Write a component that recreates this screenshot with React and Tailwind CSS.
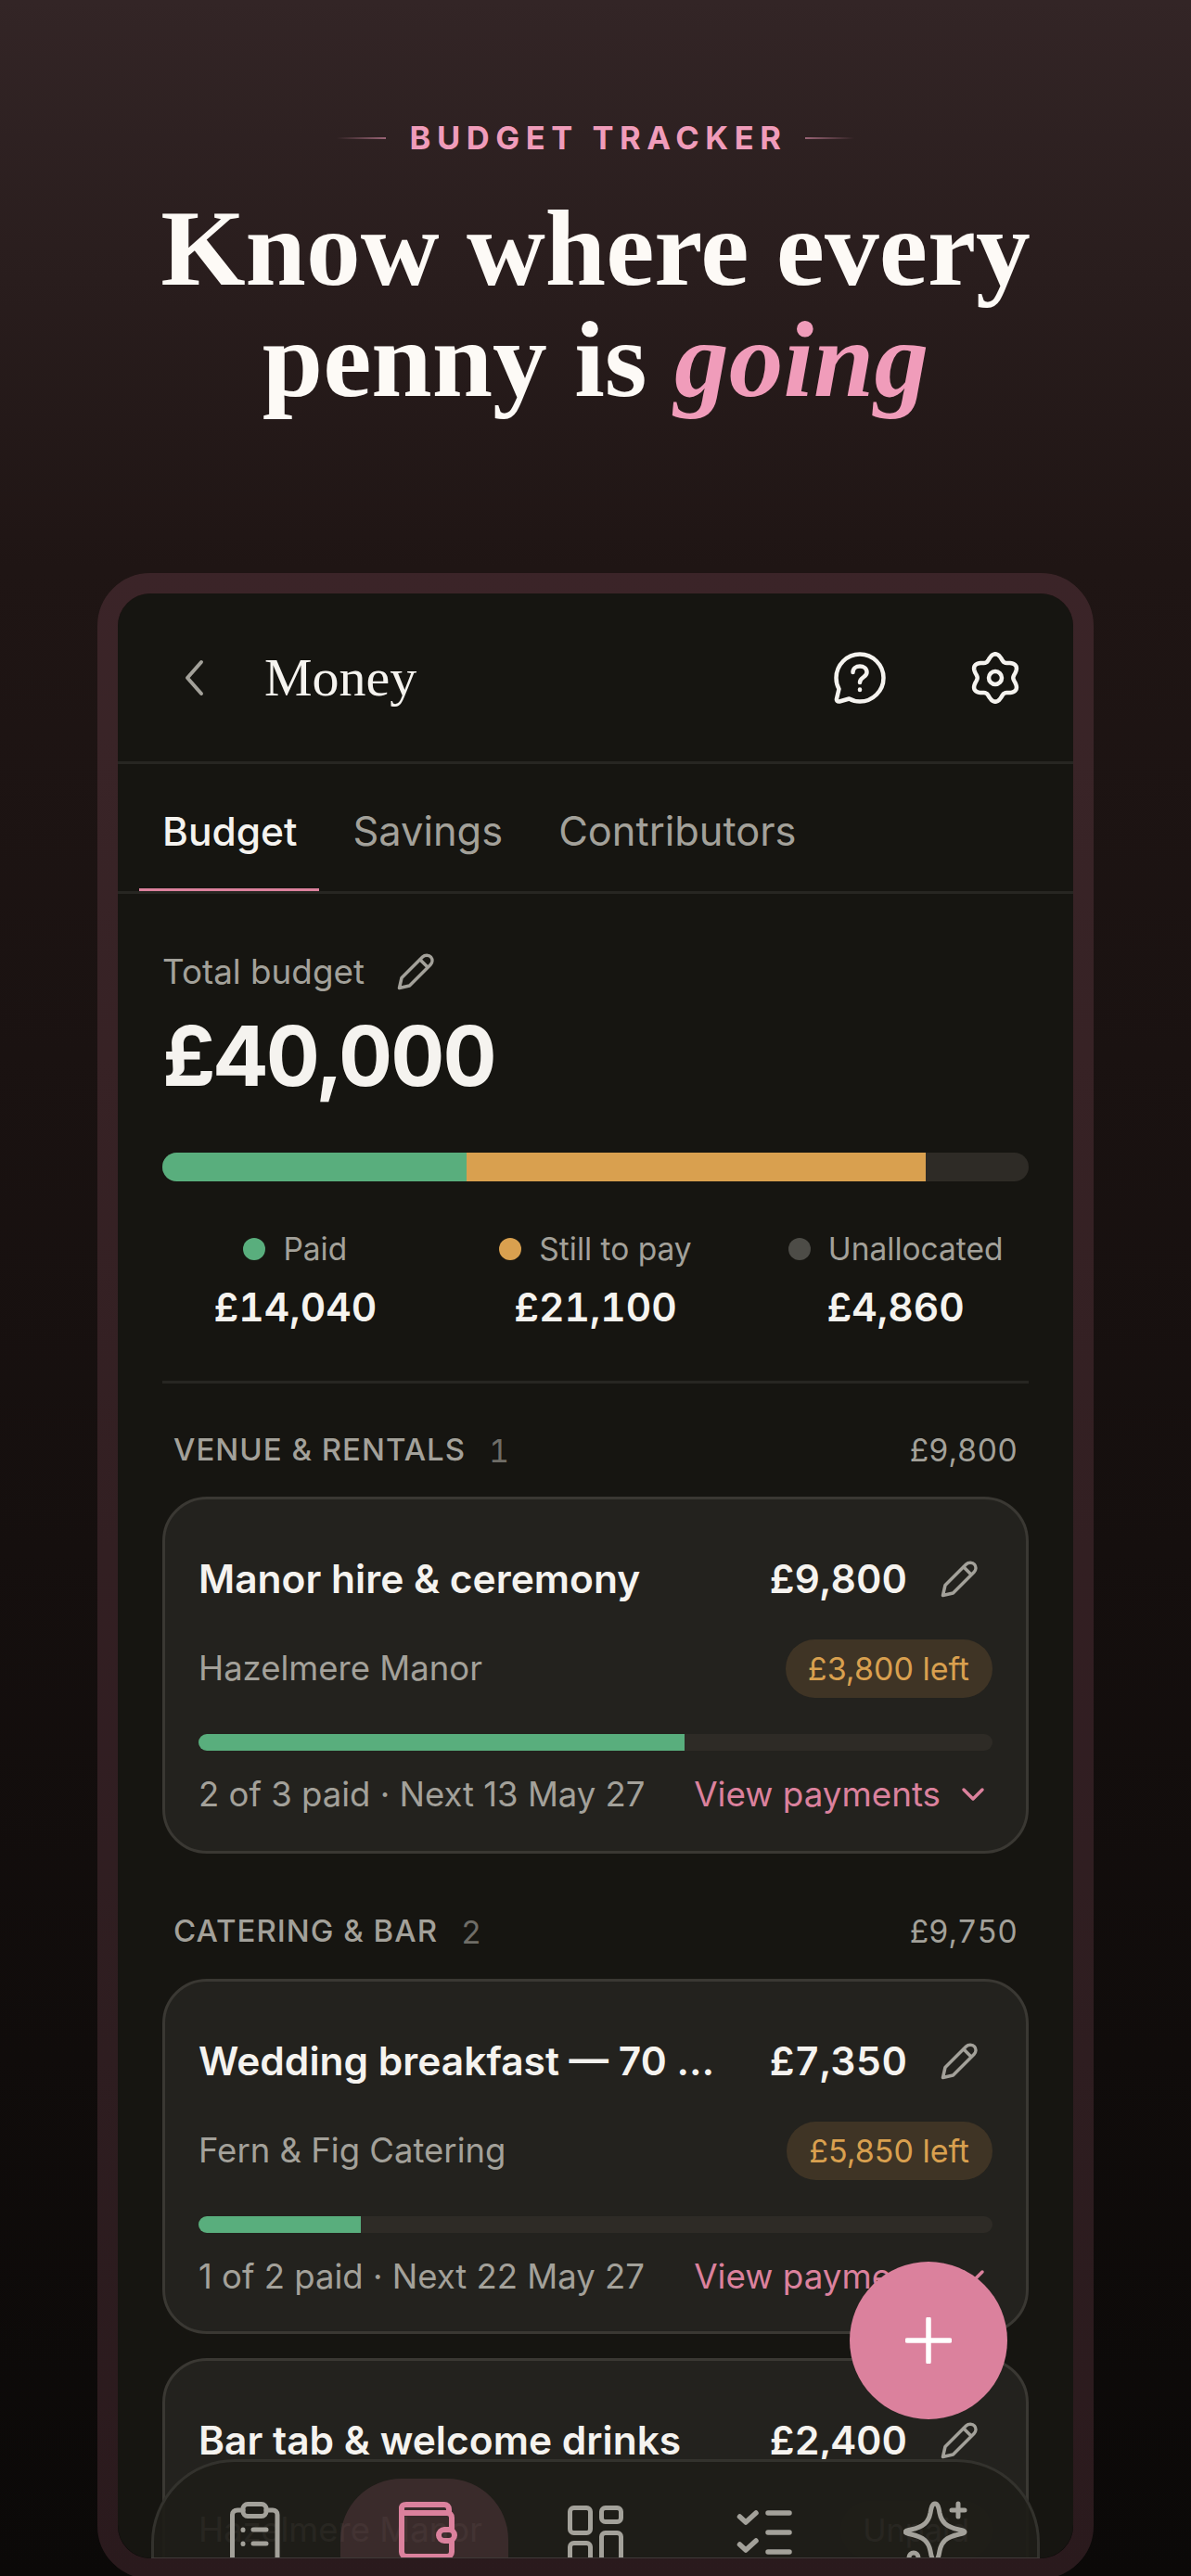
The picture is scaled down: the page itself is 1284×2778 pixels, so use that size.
import React from "react";

const Pencil = ({ cls }) => (
  <svg viewBox="0 0 40 40" fill="none" stroke="currentColor" strokeWidth="3.5" strokeLinecap="round" strokeLinejoin="round" className={cls}>
    <path d="M2.5 37.5 L5 26.5 L27.5 4 C30 1.5 34.5 1.5 36.5 4 C38.5 6.5 38.5 10 36 12.5 L13.5 35 Z" />
    <path d="M25 7 L32.5 14.5" />
  </svg>
);

const gearPath = (() => {
  const pts = [];
  for (let i = 0; i < 120; i++) {
    const t = (i / 120) * Math.PI * 2;
    const r = 22.5 + 3.2 * Math.cos(6 * t);
    pts.push((28 + r * Math.sin(t)).toFixed(2) + " " + (28 - r * Math.cos(t)).toFixed(2));
  }
  return "M" + pts.join(" L") + " Z";
})();

const Card = ({ title, amount, vendor, pill, pillAmber = true, pct, foot, tall = true }) => (
  <div className={(tall ? "h-[385px]" : "h-[383px]") + " shrink-0 rounded-[48px] border-[3px] border-[#3a3833] bg-[#23221e] px-[36px] pt-[58px]"}>
    <div className="flex items-center justify-between h-[56px]">
      <div className="w-[565px] truncate text-[42.5px] leading-[56px] font-semibold text-[#f5f3ef]">{title}</div>
      <div className="flex items-center">
        <span className="text-[42.5px] leading-[56px] font-semibold tabular-nums text-[#f5f3ef]">{amount}</span>
        <Pencil cls="w-[40px] h-[40px] ml-[36px] mr-[16px] text-[#a3a19a]" />
      </div>
    </div>
    <div className="flex items-center justify-between mt-[37px] h-[63px]">
      <span className="text-[36.5px] text-[#a3a19a]">{vendor}</span>
      <span className={pillAmber ? "rounded-full pl-[24px] pr-[25px] h-[63px] flex items-center text-[34px] text-[#d9a04f] bg-[#3f3425]" : "rounded-full pl-[24px] pr-[25px] h-[63px] flex items-center text-[34px] text-[#a3a19a] bg-[#2e2c27]"}>{pill}</span>
    </div>
    {pct != null && (
      <>
        <div className="mt-[39px] h-[18px] rounded-full bg-[#2e2b26] overflow-hidden">
          <div className="h-full bg-[#59ae7d]" style={{ width: pct + "%" }} />
        </div>
        <div className="flex items-center justify-between mt-[23px] h-[48px]">
          <span className="text-[36.5px] text-[#a3a19a]">{foot}</span>
          <span className="flex items-center text-[36.8px] text-[#db819d]">
            View payments
            <svg viewBox="0 0 26 16" fill="none" stroke="currentColor" strokeWidth="3.5" strokeLinecap="round" strokeLinejoin="round" className="w-[26px] h-[16px] ml-[22px] mr-[8px]"><path d="M3 3 L13 13 L23 3" /></svg>
          </span>
        </div>
      </>
    )}
  </div>
);

const Section = ({ label, n, total }) => (
  <div className="flex items-center justify-between h-[50px] pl-[12px] pr-[12px]">
    <div className="flex items-center">
      <span className="text-[33px] font-medium tracking-[1px] text-[#a3a19a]">{label}</span>
      <span className="text-[34px] tabular-nums text-[#6f6d67] ml-[25px]">{n}</span>
    </div>
    <span className="text-[33.5px] tabular-nums text-[#a3a19a]">{total}</span>
  </div>
);

const Legend = ({ dot, label, value }) => (
  <div className="flex flex-col items-center">
    <div className="flex items-center h-[40px]">
      <span className={"w-[24px] h-[24px] rounded-full mr-[19px] " + dot} />
      <span className="text-[33.5px] text-[#a3a19a]">{label}</span>
    </div>
    <div className="mt-[17px] text-[42.5px] leading-[52px] font-semibold tabular-nums text-[#f5f3ef]">{value}</div>
  </div>
);

export default function App() {
  return (
    <div className="relative w-[1284px] h-[2778px] overflow-hidden bg-gradient-to-b from-[#332526] via-[#1f1514] via-[22%] to-[#0b0908] font-['Inter',sans-serif]">
      <div className="flex flex-col items-center pt-[127px]">
        <div className="flex items-center h-[44px]">
          <span className="w-[53px] h-[2px] bg-gradient-to-r from-transparent to-[#9a6476]" />
          <span className="ml-[26px] mr-[20px] text-[34.5px] font-bold tracking-[0.19em] text-[#f09cba]">BUDGET TRACKER</span>
          <span className="w-[53px] h-[2px] bg-gradient-to-l from-transparent to-[#9a6476]" />
        </div>
        <h1 className="mt-[36px] text-center text-[117.5px] leading-[120px] font-bold text-[#fdfaf6] font-['Liberation_Serif',serif]">
          Know where every<br />penny is <em className="text-[#f09cba]">going</em>
        </h1>
      </div>

      <div className="absolute left-[105px] top-[618px] w-[1074px] h-[2163px] rounded-[57px] border-[22px] border-[#db819d]/15">
        <div className="relative w-full h-full rounded-[36px] bg-[#161511] overflow-hidden">
          <div className="flex items-center h-[184px] border-b-[3px] border-[#272622] pl-[70px] pr-[58px]">
            <svg viewBox="0 0 24 40" fill="none" stroke="#a3a19a" strokeWidth="4" strokeLinecap="round" strokeLinejoin="round" className="w-[24px] h-[40px]"><path d="M20 3 L5 20 L20 37" /></svg>
            <span className="ml-[64px] text-[58px] text-[#f5f3ef] font-['Liberation_Serif',serif]">Money</span>
            <div className="ml-auto flex items-center gap-[92px]">
              <svg viewBox="0 0 56 56" fill="none" stroke="#f5f3ef" strokeWidth="4.5" strokeLinecap="round" strokeLinejoin="round" className="w-[56px] h-[56px]">
                <path d="M28 2.5 C42 2.5 53.5 14 53.5 28 C53.5 42 42 53.5 28 53.5 C24 53.5 20 52.5 16.5 50.5 L6 53.5 C4 54 2.5 52.5 3 50.5 L5.5 40 C3.5 36.5 2.5 32 2.5 28 C2.5 14 14 2.5 28 2.5 Z" />
                <path d="M20.5 22 C20.5 18 24 15.5 28 15.5 C32 15.5 35.5 18 35.5 22 C35.5 27.5 28 27 28 33" />
                <path d="M28 40.5 L28 41" />
              </svg>
              <svg viewBox="0 0 56 56" fill="none" stroke="#f5f3ef" strokeWidth="4.5" strokeLinecap="round" strokeLinejoin="round" className="w-[56px] h-[56px] -mx-[2px]">
                <circle cx="28" cy="28" r="7" />
                <path d={gearPath} />
              </svg>
            </div>
          </div>

          <div className="relative flex items-center h-[140px] border-b-[3px] border-[#272622] pl-[48px] pt-[8px] gap-[60px]">
            <span className="text-[42.5px] font-medium text-[#f5f3ef]">Budget</span>
            <span className="text-[43.4px] text-[#a3a19a]">Savings</span>
            <span className="text-[43.4px] text-[#a3a19a]">Contributors</span>
            <span className="absolute left-[23px] bottom-0 w-[194px] h-[3px] bg-[#db819d]" />
          </div>

          <div className="flex flex-col px-[48px]">
            <div className="flex items-center mt-[64px] h-[40px]">
              <span className="text-[36.8px] text-[#a3a19a]">Total budget</span>
              <Pencil cls="w-[40px] h-[40px] ml-[35px] text-[#a3a19a]" />
            </div>
            <div className="mt-[16px] text-[90px] leading-[110px] font-bold tabular-nums tracking-[-2px] text-[#f5f3ef]">£40,000</div>
            <div className="flex mt-[49px] h-[31px] rounded-full bg-[#2e2b26] overflow-hidden">
              <div className="w-[328px] bg-[#59ae7d]" />
              <div className="w-[495px] bg-[#d9a04f]" />
            </div>
            <div className="grid grid-cols-3 gap-[37px] mt-[53px]">
              <Legend dot="bg-[#59ae7d]" label="Paid" value="£14,040" />
              <Legend dot="bg-[#d9a04f]" label="Still to pay" value="£21,100" />
              <Legend dot="bg-[#4d4c47]" label="Unallocated" value="£4,860" />
            </div>
            <div className="mt-[53px] h-[3px] bg-[#272622]" />
            <div className="mt-[47px]"><Section label="VENUE & RENTALS" n="1" total="£9,800" /></div>
            <div className="mt-[25px]">
              <Card title="Manor hire & ceremony" amount="£9,800" vendor="Hazelmere Manor" pill="£3,800 left" pct={61.2} foot="2 of 3 paid · Next 13 May 27" />
            </div>
            <div className="mt-[59px]"><Section label="CATERING & BAR" n="2" total="£9,750" /></div>
            <div className="mt-[26px]">
              <Card tall={false} title="Wedding breakfast — 70 guests" amount="£7,350" vendor="Fern & Fig Catering" pill="£5,850 left" pct={20.4} foot="1 of 2 paid · Next 22 May 27" />
            </div>
            <div className="mt-[26px]">
              <Card title="Bar tab & welcome drinks" amount="£2,400" vendor="Hazelmere Manor" pill="Unpaid" pillAmber={false} />
            </div>
          </div>

          <div className="absolute left-[36px] right-[36px] bottom-[-60px] h-[167px] rounded-t-[90px] border-[3px] border-[#33322d] bg-[#1e1d18]/[0.93] flex items-start justify-between">
            <div className="absolute left-[201px] top-[18px] w-[181px] h-[160px] rounded-t-[66px] bg-[#db819d]/15" />
            <div className="relative flex w-full">
              <svg viewBox="0 0 58 72" fill="none" stroke="#a3a19a" strokeWidth="5" strokeLinecap="round" strokeLinejoin="round" className="absolute left-[80px] top-[41px] w-[58px] h-[72px]">
                <path d="M16 11 H10 C6.5 11 4.5 13 4.5 16 V66 C4.5 69 6.5 71 10 71 H48 C51 71 53 69 53 66 V16 C53 13 51 11 48 11 H41" />
                <rect x="16" y="4.5" width="25" height="13" rx="5" />
                <path d="M16 32 V32.5 M27 32 H41 M16 47 V47.5 M27 47 H41" />
              </svg>
              <svg viewBox="0 0 70 66" fill="none" stroke="#db819d" strokeWidth="6" strokeLinecap="round" strokeLinejoin="round" className="absolute left-[261px] top-[40px] w-[70px] h-[66px]">
                <path d="M6 10 V57 C6 60 8 62 11 62 H55 C58 62 60 60 60 57 V45 M60 33 V20 C60 17 58 15 55 15 H6" />
                <path d="M6 10 C6 7 8 6 11 6 H52 C55 6 57 8 57 11 V15" />
                <rect x="46" y="33" width="17" height="12" rx="6" />
              </svg>
              <svg viewBox="0 0 64 70" fill="none" stroke="#a3a19a" strokeWidth="5" strokeLinecap="round" strokeLinejoin="round" className="absolute left-[444px] top-[45px] w-[64px] h-[70px]">
                <rect x="4.5" y="4.5" width="22" height="27" rx="4" />
                <rect x="38.5" y="4.5" width="21" height="15" rx="4" />
                <rect x="38.5" y="31.5" width="21" height="30" rx="4" />
                <rect x="4.5" y="42.5" width="22" height="19" rx="4" />
              </svg>
              <svg viewBox="0 0 64 56" fill="none" stroke="#a3a19a" strokeWidth="5.5" strokeLinecap="round" strokeLinejoin="round" className="absolute left-[626px] top-[49px] w-[64px] h-[56px]">
                <path d="M5.5 10 L12 16 L23 6 M36 6 H59 M36 27 H59 M5.5 40 L12 46 L23 36 M36 48 H59" />
              </svg>
              <svg viewBox="0 0 76 72" fill="none" stroke="#a3a19a" strokeWidth="5" strokeLinecap="round" strokeLinejoin="round" className="absolute left-[808px] top-[40px] w-[76px] h-[72px]">
                <path d="M34 5 C37 5 38 9 39 15 C41 25 46 30 60 33 C64 34 66 34 66 35.5 C66 37 64 37 60 38 C46 41 41 46 39 56 C38 62 37 66 34 66 C31 66 30 62 29 56 C27 46 22 41 8 38 C4 37 2 37 2 35.5 C2 34 4 34 8 33 C22 30 27 25 29 15 C30 9 31 5 34 5 Z" />
                <path d="M59 5 V19 M52 12 H66" />
                <circle cx="11" cy="63" r="5" />
              </svg>
            </div>
          </div>
          <div className="absolute left-[36px] right-[36px] bottom-0 h-px bg-[#3f3a38]" />

          <button className="absolute left-[789px] top-[1799px] w-[170px] h-[170px] rounded-full bg-[#db819d] flex items-center justify-center">
            <svg viewBox="0 0 50 50" fill="none" stroke="#ffffff" strokeWidth="5.5" strokeLinecap="round" className="w-[50px] h-[50px]"><path d="M25 2 V48 M2 25 H48" /></svg>
          </button>
        </div>
      </div>
    </div>
  );
}
